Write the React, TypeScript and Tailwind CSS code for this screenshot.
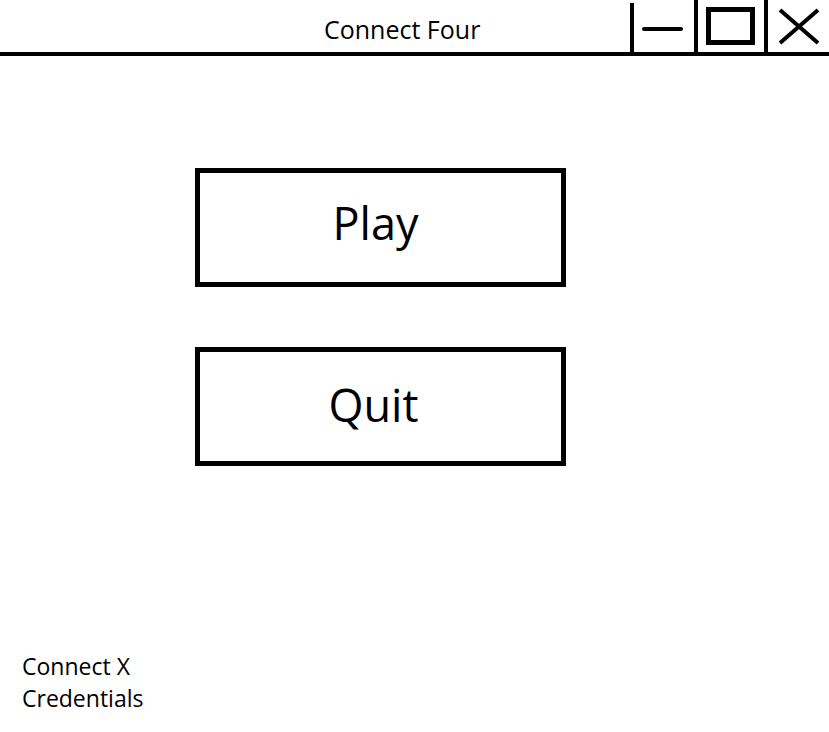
import React from 'react'

const font = { fontFamily: '"Open Sans", "Noto Sans", sans-serif' }

function MenuButton({ label, className = '' }: { label: string; className?: string }) {
  return (
    <button
      className={`ml-[195px] flex h-[119px] w-[371px] items-center justify-center border-[5px] border-black bg-white text-[45px] leading-none text-black ${className}`}
    >
      {label}
    </button>
  )
}

export default function App() {
  return (
    <div className="flex h-[732px] w-full flex-col bg-white text-black" style={font}>
      {/* Title bar */}
      <header className="flex h-[56px] items-start border-b-4 border-black">
        <div className="flex-1 pl-[324px] pt-[17px] text-[25px] leading-none">Connect Four</div>

        <div className="flex h-[52px] items-start">
          {/* minimize */}
          <div className="mt-[3px] h-[49px] w-[64px] border-l-4 border-black">
            <div className="ml-[8px] mt-[24px] h-[4px] w-[41px] rounded-full bg-black" />
          </div>
          {/* maximize */}
          <div className="h-[52px] w-[70px] border-l-4 border-black">
            <div className="ml-[8px] mt-[7px] h-[38px] w-[49px] border-[5px] border-black" />
          </div>
          {/* close */}
          <div className="h-[52px] w-[65px] border-l-4 border-black">
            <svg className="ml-[10px] mt-[8px]" width="42" height="37" viewBox="0 0 42 37">
              <line x1="2" y1="2" x2="40" y2="35" stroke="black" strokeWidth="4" />
              <line x1="40" y1="2" x2="2" y2="35" stroke="black" strokeWidth="4" />
            </svg>
          </div>
        </div>
      </header>

      {/* Menu */}
      <main className="flex flex-col pt-[112px]">
        <MenuButton label="Play" className="pb-[10px] pr-[10px]" />
        <MenuButton label="Quit" className="mt-[60px] pb-[4px] pr-[14px]" />
      </main>

      {/* Footer */}
      <footer className="mt-[184px] pl-[22px] text-[23px] leading-[32px]">
        <div>Connect X</div>
        <div>Credentials</div>
      </footer>
    </div>
  )
}
